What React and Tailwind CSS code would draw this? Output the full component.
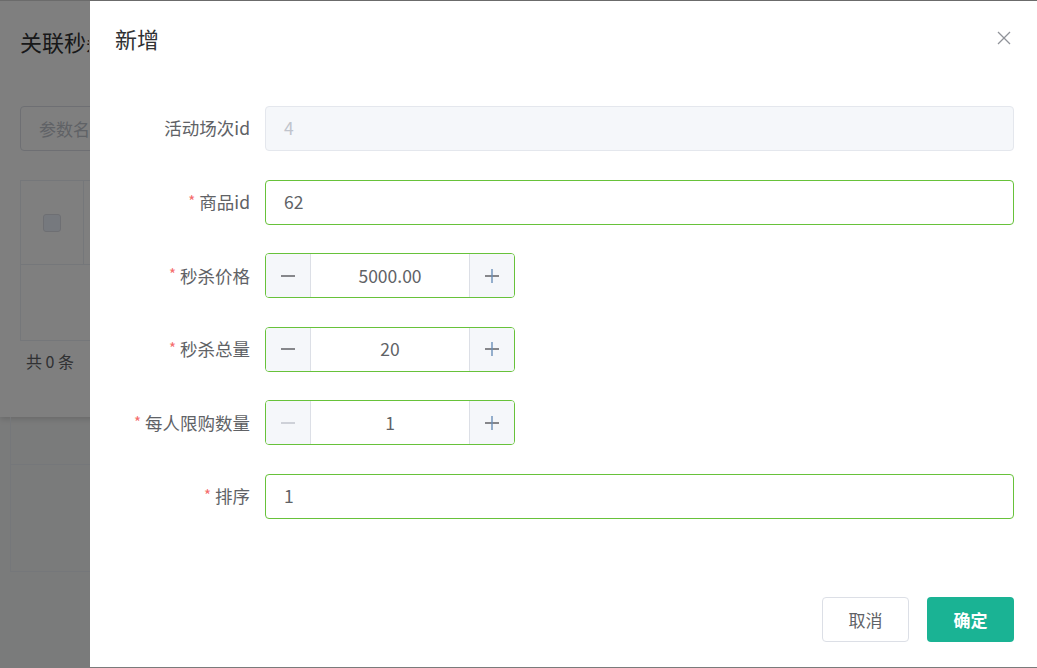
import React from "react";

const font = { fontFamily: '"Noto Sans CJK SC", "Noto Sans", sans-serif' };

function Label({ text, required }) {
  return (
    <div className="w-[175px] shrink-0 pr-[15px] flex items-center justify-end text-[17.5px] text-[#606266]">
      {required && <span className="text-[#f56c6c] text-[15px] mr-[4px] relative -top-[1px]">*</span>}
      <span>{text}</span>
    </div>
  );
}

function TextInput({ value, disabled }) {
  return (
    <div
      className={
        "w-[749px] h-[45px] rounded-[4px] border flex items-center px-[18px] text-[17.5px] " +
        (disabled
          ? "bg-[#f5f7fa] border-[#e4e7ed] text-[#c0c4cc]"
          : "bg-white border-[#67c23a] text-[#606266]")
      }
    >
      {value}
    </div>
  );
}

function Minus({ disabled }) {
  return (
    <svg width="18" height="18" viewBox="0 0 18 18">
      <line x1="2" y1="9" x2="16" y2="9" stroke={disabled ? "#c0c4cc" : "#606266"} strokeWidth="1.4" />
    </svg>
  );
}

function Plus() {
  return (
    <svg width="18" height="18" viewBox="0 0 18 18">
      <line x1="2" y1="9" x2="16" y2="9" stroke="#606266" strokeWidth="1.4" />
      <line x1="9" y1="2" x2="9" y2="16" stroke="#6a8fb8" strokeWidth="1.4" />
    </svg>
  );
}

function NumberInput({ value, minDisabled }) {
  return (
    <div className="w-[250px] h-[45px] rounded-[4px] border border-[#67c23a] flex overflow-hidden bg-white">
      <div className="w-[45px] bg-[#f5f7fa] border-r border-[#dcdfe6] flex items-center justify-center">
        <Minus disabled={minDisabled} />
      </div>
      <div className="flex-1 flex items-center justify-center text-[17.5px] text-[#606266]">{value}</div>
      <div className="w-[45px] bg-[#f5f7fa] border-l border-[#dcdfe6] flex items-center justify-center">
        <Plus />
      </div>
    </div>
  );
}

function Row({ label, required, children }) {
  return (
    <div className="flex h-[45px]">
      <Label text={label} required={required} />
      {children}
    </div>
  );
}

export default function App() {
  return (
    <div className="relative w-[1037px] h-[668px] overflow-hidden bg-[#f5f6f6]" style={font}>
      {/* underlying page */}
      <div className="flex flex-col h-full">
        <div className="h-[417px] bg-white border-t border-[#d6d6d6] px-[20px] flex flex-col shadow-[0_2px_6px_rgba(0,0,0,0.15)]">
          <div className="h-[80px] flex items-center">
            <div className="w-[69px] overflow-hidden whitespace-nowrap text-[22px] text-[#303133]">关联秒杀商品</div>
          </div>
          <div className="h-[45px] mt-[25px] w-[300px] border border-[#dcdfe6] rounded-[4px] flex items-center px-[18px]">
            <div className="w-[50px] overflow-hidden whitespace-nowrap text-[17px] text-[#c0c4cc]">参数名称</div>
          </div>
          <div className="mt-[29px] border border-[#ebeef5] w-[1000px]">
            <div className="h-[84px] flex border-b border-[#ebeef5]">
              <div className="w-[63px] flex items-center justify-center border-r border-[#ebeef5]">
                <div className="w-[18px] h-[18px] rounded-[3px] border border-[#dcdfe6] bg-[#edf2fc]" />
              </div>
              <div className="flex-1" />
            </div>
            <div className="h-[75px]" />
          </div>
          <div className="mt-[8px] text-[16px] text-[#606266] px-[6px]">共 0 条</div>
        </div>
        <div className="flex-1 pl-[10px]">
          <div className="border-l border-[#ebeef5] h-[155px] flex flex-col">
            <div className="h-[48px] border-b border-[#ebeef5]" />
            <div className="h-[107px] border-b border-[#ebeef5]" />
          </div>
        </div>
      </div>

      {/* overlay */}
      <div className="absolute inset-0 bg-black/50" />

      {/* dialog */}
      <div className="absolute left-[90px] top-[1px] w-[980px] h-[666px] bg-white flex flex-col">
        <div className="h-[80px] flex items-center justify-between pl-[25px] pr-[0px]">
          <span className="text-[22px] text-[#303133] -mt-[6px]">新增</span>
          <div className="absolute left-[906px] top-[29px] w-[16px] h-[16px]">
            <svg width="16" height="16" viewBox="0 0 16 16">
              <line x1="2" y1="2" x2="14" y2="14" stroke="#909399" strokeWidth="1.3" />
              <line x1="14" y1="2" x2="2" y2="14" stroke="#909399" strokeWidth="1.3" />
            </svg>
          </div>
        </div>
        <div className="flex flex-col gap-[28.6px] mt-[25px]">
          <Row label="活动场次id">
            <TextInput value="4" disabled />
          </Row>
          <Row label="商品id" required>
            <TextInput value="62" />
          </Row>
          <Row label="秒杀价格" required>
            <NumberInput value="5000.00" />
          </Row>
          <Row label="秒杀总量" required>
            <NumberInput value="20" />
          </Row>
          <Row label="每人限购数量" required>
            <NumberInput value="1" minDisabled />
          </Row>
          <Row label="排序" required>
            <TextInput value="1" />
          </Row>
        </div>
        <div className="mt-auto mb-[25px] flex justify-start pl-[732px] gap-[18px]">
          <button className="w-[87px] h-[45px] rounded-[4px] border border-[#dcdfe6] bg-white text-[17px] text-[#606266]">
            取消
          </button>
          <button className="w-[87px] h-[45px] rounded-[4px] bg-[#1ab394] text-[17px] text-white font-bold">
            确定
          </button>
        </div>
      </div>
    </div>
  );
}
